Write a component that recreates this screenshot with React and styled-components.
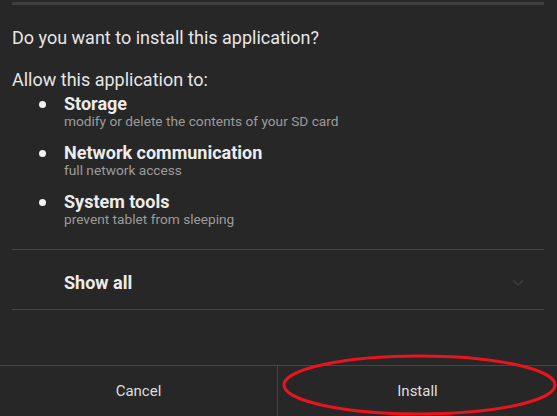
import React from "react";
import styled, { createGlobalStyle } from "styled-components";

const GlobalStyle = createGlobalStyle`
  html, body {
    margin: 0;
    padding: 0;
    background: #272727;
  }
  body {
    font-family: Roboto, "Noto Sans", sans-serif;
    -webkit-font-smoothing: antialiased;
  }
`;

const Screen = styled.div`
  position: relative;
  height: 416px;
  display: flex;
  flex-direction: column;
  background: #272727;
  color: #e6e6e6;
  overflow: hidden;
`;

const TopBar = styled.div`
  margin: 2px 13px 0 12px;
  height: 3px;
  background: #3e3e3e;
`;

const Body = styled.div`
  padding: 21px 13px 0 12px;
  display: flex;
  flex-direction: column;
`;

const Line = styled.div`
  font-size: 18px;
  line-height: 24px;
  margin-top: ${(p) => p.$gap || 0}px;
`;

const List = styled.ul`
  list-style: none;
  margin: 2px 0 0;
  padding: 0;
  display: flex;
  flex-direction: column;
  gap: 15px;
`;

const Item = styled.li`
  display: flex;
  padding-left: 27px;
  gap: 18px;
`;

const Bullet = styled.span`
  width: 7px;
  height: 7px;
  border-radius: 50%;
  background: #f2f2f2;
  margin-top: 7px;
  flex: none;
`;

const Texts = styled.div`
  display: flex;
  flex-direction: column;
`;

const Title = styled.div`
  font-size: 18px;
  font-weight: 700;
  line-height: 20px;
  color: #ececec;
`;

const Sub = styled.div`
  font-size: 13.7px;
  line-height: 14px;
  color: #9c9c9c;
`;

const Divider = styled.div`
  height: 1px;
  background: #454545;
  margin-top: ${(p) => p.$gap || 0}px;
`;

const ShowAll = styled.div`
  height: 59px;
  display: flex;
  align-items: center;
  justify-content: space-between;
  padding: 6px 20px 0 52px;
  font-size: 18px;
  font-weight: 700;
  color: #ececec;
  box-sizing: border-box;
`;

const Chevron = styled.svg`
  margin-top: 0;
`;

const Spacer = styled.div`
  flex: 1;
`;

const ButtonBar = styled.div`
  display: grid;
  grid-template-columns: 277px 1px 1fr;
  height: 50px;
  border-top: 1px solid #464646;
`;

const Button = styled.div`
  display: flex;
  align-items: center;
  justify-content: center;
  font-size: 15px;
  color: #dedede;
  padding-bottom: 1px;
`;

const VLine = styled.div`
  background: #464646;
`;

const Mark = styled.svg`
  position: absolute;
  left: 282px;
  top: 353px;
  width: 276px;
  height: 64px;
  pointer-events: none;
`;

const perms = [
  { title: "Storage", sub: "modify or delete the contents of your SD card" },
  { title: "Network communication", sub: "full network access" },
  { title: "System tools", sub: "prevent tablet from sleeping" },
];

const App = () => {
  return (
    <Screen>
      <GlobalStyle />
      <TopBar />
      <Body>
        <Line>Do you want to install this application?</Line>
        <Line $gap={18}>Allow this application to:</Line>
        <List>
          {perms.map((p) => (
            <Item key={p.title}>
              <Bullet />
              <Texts>
                <Title>{p.title}</Title>
                <Sub>{p.sub}</Sub>
              </Texts>
            </Item>
          ))}
        </List>
        <Divider $gap={23} />
        <ShowAll>
          <span>Show all</span>
          <Chevron width="12" height="8" viewBox="0 0 12 8">
            <path d="M1 1.5 L6 6 L11 1.5" fill="none" stroke="#373737" strokeWidth="2" />
          </Chevron>
        </ShowAll>
        <Divider />
      </Body>
      <Spacer />
      <ButtonBar>
        <Button>Cancel</Button>
        <VLine />
        <Button>Install</Button>
      </ButtonBar>
      <Mark viewBox="0 0 276 64">
        <ellipse cx="137.5" cy="32" rx="135.5" ry="29" fill="none" stroke="#e8141e" strokeWidth="3" />
      </Mark>
    </Screen>
  );
};

export default App;
